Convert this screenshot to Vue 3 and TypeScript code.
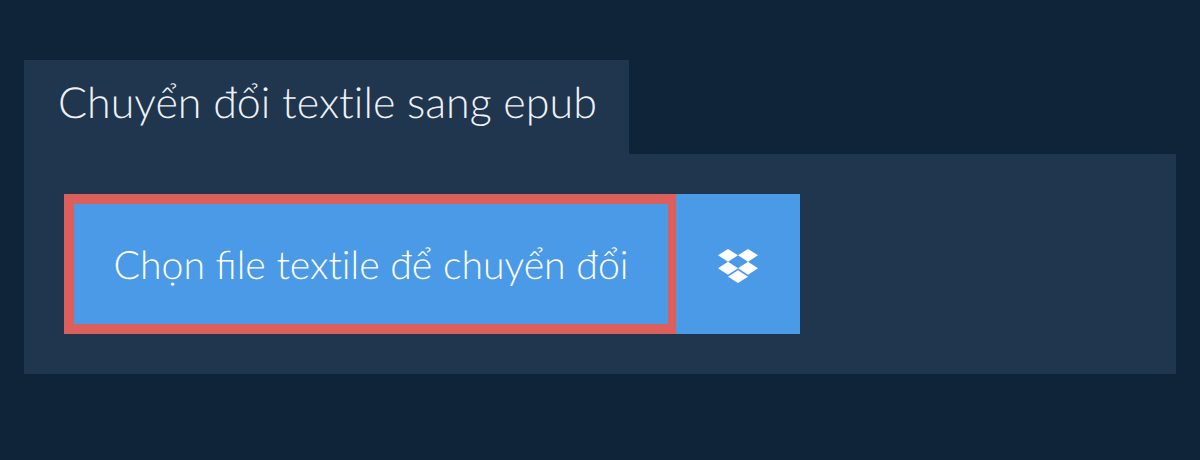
<script setup lang="ts">
const title = 'Chuyển đổi textile sang epub'
</script>

<template>
  <div class="page">
    <h1 class="tab">{{ title }}</h1>
    <div class="panel">
      <div class="picker">
        <button class="choose">Chọn <span class="lig">fi</span>le textile để chuyển đổi</button>
        <button class="dropbox" title="Dropbox">
          <svg viewBox="0 0 24 24" width="40" height="40" fill="#fff">
            <path d="M6 1.8 0 5.6l6 3.9 6-3.9zM18 1.8l-6 3.8 6 3.9 6-3.9zM0 13.3l6 3.9 6-3.9-6-3.8zM18 9.5l-6 3.8 6 3.9 6-3.9zM6 18.4l6 3.8 6-3.8-6-3.9z" />
          </svg>
        </button>
      </div>
    </div>
  </div>
</template>

<style scoped>
.page {
  display: flex;
  flex-direction: column;
  align-items: flex-start;
  box-sizing: border-box;
  height: 460px;
  padding: 60px 24px 0;
  background: #0f2339;
  font-family: Lato, "Liberation Sans", sans-serif;
  font-variant-ligatures: none;
  text-rendering: geometricPrecision;
}

.tab {
  margin: 0;
  padding: 0 32px 0 34px;
  height: 94px;
  line-height: 86px;
  font-size: 43px;
  font-weight: 300;
  color: #eef2f6;
  background: #20354e;
}

.panel {
  align-self: stretch;
  height: 220px;
  padding: 40px;
  box-sizing: border-box;
  background: #20354e;
}

.picker {
  display: flex;
  height: 140px;
}

.choose {
  width: 612px;
  height: 140px;
  padding: 0;
  border: 10px solid #dd5f5c;
  border-right-width: 8px;
  background: #4b9ae8;
  color: #fff;
  font-family: inherit;
  font-variant-ligatures: none;
  text-rendering: inherit;
  font-size: 39.2px;
  font-weight: 300;
}

.lig {
  font-variant-ligatures: common-ligatures;
}

.dropbox {
  display: flex;
  align-items: center;
  justify-content: center;
  width: 124px;
  height: 140px;
  padding: 4px 0 0;
  border: 0;
  background: #4b9ae8;
}
</style>
